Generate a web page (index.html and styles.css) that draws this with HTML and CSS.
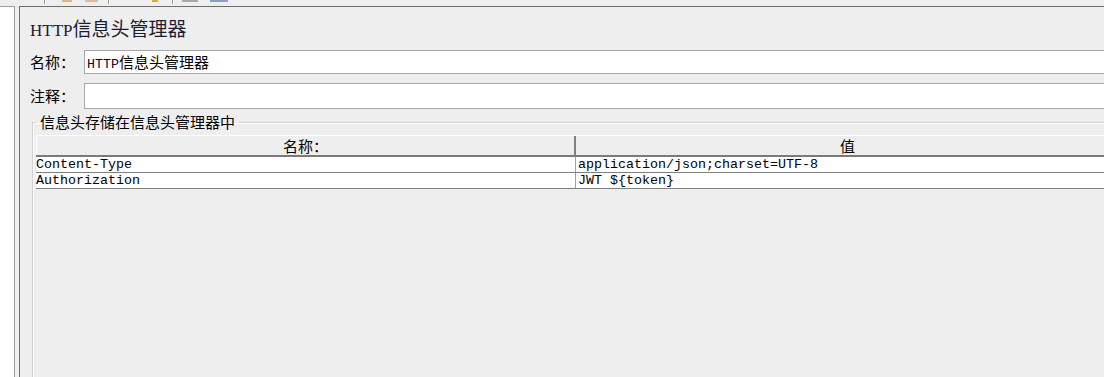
FILE: index.html
```html
<!DOCTYPE html>
<html lang="zh">
<head>
<meta charset="utf-8">
<title>HTTP信息头管理器</title>
<link rel="stylesheet" href="styles.css">
</head>
<body>
<div class="app">
  <div class="toolbar">
    <span class="sep s1"></span>
    <span class="frag f1"></span>
    <span class="frag f2"></span>
    <span class="sep s2"></span>
    <span class="frag f3"></span>
    <span class="sep s3"></span>
    <span class="frag f4"></span>
    <span class="frag f5"></span>
  </div>
  <div class="workspace">
    <div class="tree"></div>
    <div class="panel">
      <h1 class="title"><span class="lat">HTTP</span>信息头管理器</h1>
      <div class="field">
        <label class="label">名称：</label>
        <div class="input"><span class="mono">HTTP</span>信息头管理器</div>
      </div>
      <div class="field notes">
        <label class="label">注释：</label>
        <div class="input tall"></div>
      </div>
      <fieldset class="group">
        <legend class="legend">信息头存储在信息头管理器中</legend>
        <div class="table">
          <div class="thead">
            <div class="th c1">名称：</div>
            <div class="th c2">值</div>
          </div>
          <div class="tr">
            <div class="td c1">Content-Type</div>
            <div class="td c2">application/json;charset=UTF-8</div>
          </div>
          <div class="tr">
            <div class="td c1">Authorization</div>
            <div class="td c2">JWT ${token}</div>
          </div>
        </div>
      </fieldset>
    </div>
  </div>
</div>
</body>
</html>
```
FILE: styles.css
```css
html, body {
  margin: 0;
  height: 100%;
  overflow: hidden;
  background: #eeeeee;
}
body {
  font-family: "Noto Sans CJK SC", "Liberation Sans", sans-serif;
  color: #000;
}
.app {
  display: flex;
  flex-direction: column;
  height: 377px;
}
.toolbar {
  height: 6px;
  display: flex;
  align-items: flex-start;
  flex: none;
}
.sep {
  width: 1px;
  height: 4px;
  background: #9a9a9a;
  border-right: 1px solid #ffffff;
}
.frag {
  height: 2px;
}
.s1 { margin-left: 44px; }
.f1 { margin-left: 16px; width: 10px; background: #e2b780; }
.f2 { margin-left: 13px; width: 13px; background: #d9bf9c; }
.s2 { margin-left: 10px; }
.f3 { margin-left: 42px; width: 6px; background: #e0b020; }
.s3 { margin-left: 14px; }
.f4 { margin-left: 8px; width: 16px; background: #a8a8a8; }
.f5 { margin-left: 12px; width: 18px; background: #8aa0c8; }

.workspace {
  flex: 1;
  display: flex;
  gap: 4px;
  min-height: 0;
}
.tree {
  width: 15px;
  box-sizing: border-box;
  background: #ffffff;
  border-top: 1px solid #a0a0a0;
  border-right: 1px solid #a0a0a0;
  flex: none;
}
.panel {
  flex: none;
  width: 1100px;
  box-sizing: border-box;
  border-top: 1px solid #6d6d6d;
  border-left: 1px solid #6d6d6d;
  padding: 9px 0 0 10px;
  display: flex;
  flex-direction: column;
}
.title {
  margin: 0;
  font-weight: normal;
  font-size: 19px;
  line-height: 24px;
  height: 24px;
  color: #1c1c30;
  font-family: "Noto Sans CJK SC", serif;
}
.title .lat {
  font-family: "Liberation Serif", serif;
  font-size: 17px;
}
.field {
  display: flex;
  align-items: center;
  margin-top: 10px;
}
.field.notes {
  margin-top: 9px;
}
.label {
  width: 54px;
  flex: none;
  font-size: 15px;
  line-height: 20px;
}
.input {
  flex: 1;
  height: 24px;
  box-sizing: border-box;
  border: 1px solid #a8a8a8;
  background: #ffffff;
  font-size: 15px;
  line-height: 22px;
  padding-left: 2px;
  white-space: nowrap;
}
.input.tall {
  height: 26px;
}
.mono {
  font-family: "Liberation Mono", monospace;
  font-size: 13.33px;
  color: #200020;
}
.group {
  flex: 1;
  min-width: 0;
  margin: 4px 0 0 2px;
  padding: 4px 0 0 3px;
  border: 1px solid #d0d0d0;
  border-bottom: none;
  border-right: none;
  box-shadow: inset 1px 1px 0 #ffffff;
}
.legend {
  padding: 0 4px;
  font-size: 15px;
  line-height: 18px;
}
.table {
  display: flex;
  flex-direction: column;
}
.thead {
  display: flex;
  height: 22px;
  box-sizing: border-box;
  background: #eeeeee;
  border-top: 1px solid #ffffff;
  border-bottom: 2px solid #7a7a7a;
}
.th {
  font-size: 15px;
  line-height: 19px;
  text-align: center;
}
.th.c1 {
  width: 540px;
  box-sizing: border-box;
  border-left: 1px solid #ffffff;
  border-right: 2px solid #808080;
}
.th.c2 {
  flex: 1;
}
.tr {
  display: flex;
  height: 16px;
  box-sizing: border-box;
  background: #ffffff;
  border-bottom: 1px solid #808080;
}
.td {
  font-family: "Liberation Mono", monospace;
  font-size: 13.33px;
  line-height: 15px;
  white-space: nowrap;
}
.td.c1 {
  width: 540px;
  box-sizing: border-box;
  border-right: 1px solid #a0a0a0;
}
.td.c2 {
  flex: 1;
  padding-left: 2px;
}
```
